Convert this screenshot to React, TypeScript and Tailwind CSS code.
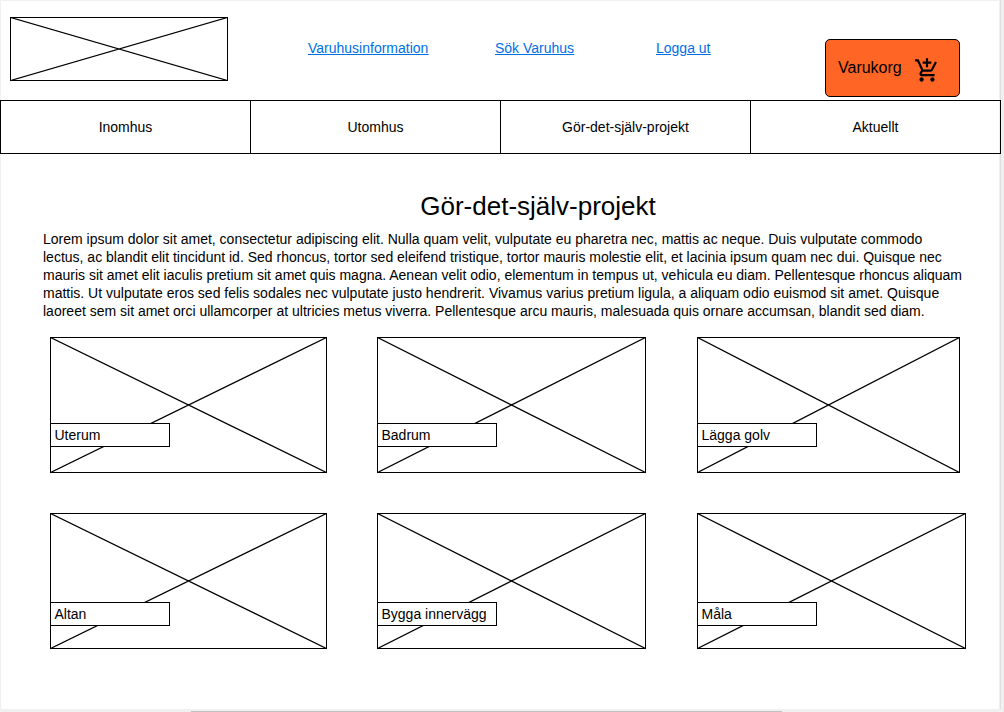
import { MdAddShoppingCart } from "react-icons/md";

function ImageBox({ width, height }: { width: number; height: number }) {
  return (
    <svg width={width} height={height} className="block" stroke="#000" fill="none">
      <rect x="0.5" y="0.5" width={width - 1} height={height - 1} shapeRendering="crispEdges" />
      <path d={`M0.5 0.5L${width - 0.5} ${height - 0.5}M${width - 0.5} 0.5L0.5 ${height - 0.5}`} strokeWidth="1.3" />
    </svg>
  );
}

function ProjectCard({ label, width, low }: { label: string; width: number; low?: boolean }) {
  return (
    <div className="relative">
      <ImageBox width={width} height={136} />
      <div
        className={`absolute left-0 flex h-6 w-[120px] items-center border border-black bg-white pl-[3.5px] ${low ? "top-[89px]" : "top-[86px]"}`}
      >
        {label}
      </div>
    </div>
  );
}

const navItems = ["Inomhus", "Utomhus", "Gör-det-själv-projekt", "Aktuellt"];

const intro = [
  "Lorem ipsum dolor sit amet, consectetur adipiscing elit. Nulla quam velit, vulputate eu pharetra nec, mattis ac neque. Duis vulputate commodo",
  "lectus, ac blandit elit tincidunt id. Sed rhoncus, tortor sed eleifend tristique, tortor mauris molestie elit, et lacinia ipsum quam nec dui. Quisque nec",
  "mauris sit amet elit iaculis pretium sit amet quis magna. Aenean velit odio, elementum in tempus ut, vehicula eu diam. Pellentesque rhoncus aliquam",
  "mattis. Ut vulputate eros sed felis sodales nec vulputate justo hendrerit. Vivamus varius pretium ligula, a aliquam odio euismod sit amet. Quisque",
  "laoreet sem sit amet orci ullamcorper at ultricies metus viverra. Pellentesque arcu mauris, malesuada quis ornare accumsan, blandit sed diam.",
];

export default function App() {
  return (
    <div className="flex h-[712px] w-[1004px] flex-col overflow-hidden bg-[#f0f0f0] font-['Liberation_Sans',Arial,sans-serif] text-[14px] leading-[18px] text-black">
      <div className="flex h-[709px] shrink-0">
        <div className="z-10 w-[1000px] shrink-0 border-t border-r border-l border-[#f0f0f0] bg-white">
          <header className="flex h-[99px] items-start">
            <div className="mt-4 ml-[9px]">
              <ImageBox width={218} height={64} />
            </div>
            <nav className="mt-[38px] ml-20 flex w-[517px] text-[#006fe6] underline">
              <a className="w-[187px]">Varuhusinformation</a>
              <a className="w-[161px]">Sök Varuhus</a>
              <a>Logga ut</a>
            </nav>
            <button className="mt-[38px] flex h-[58px] w-[135px] items-start rounded-[5px] border border-black bg-[#ff6524] pl-3 text-base">
              <span className="mt-4 w-[76px] text-left">Varukorg</span>
              <MdAddShoppingCart className="mt-[17px] h-[27px] w-[26px]" preserveAspectRatio="none" />
            </button>
          </header>
          <nav className="-ml-px flex h-[54px] w-[1001px] border border-black">
            {navItems.map((item) => (
              <a
                key={item}
                className="flex w-[250px] shrink-0 items-center justify-center border-r border-black pb-px last:w-[249px] last:border-r-0"
              >
                {item}
              </a>
            ))}
          </nav>
          <main className="pl-[42px]">
            <h1 className="mt-[37px] w-[990px] text-center text-[26px] leading-[30px]">Gör-det-själv-projekt</h1>
            <p className="mt-[9px] whitespace-nowrap">
              {intro.map((line) => (
                <span key={line} className="block">
                  {line}
                </span>
              ))}
            </p>
            <section className="mt-[17px] ml-[7px] flex flex-col gap-10">
              <div className="flex">
                <div className="w-[327px]"><ProjectCard label="Uterum" width={277} /></div>
                <div className="w-80"><ProjectCard label="Badrum" width={269} /></div>
                <ProjectCard label="Lägga golv" width={263} />
              </div>
              <div className="flex">
                <div className="w-[327px]"><ProjectCard label="Altan" width={277} low /></div>
                <div className="w-80"><ProjectCard label="Bygga innervägg" width={269} low /></div>
                <ProjectCard label="Måla" width={269} low />
              </div>
            </section>
          </main>
        </div>
        <div className="w-px bg-[#e0e0e0]" />
      </div>
      <div className="mt-[2px] ml-[191px] h-px w-[591px] bg-[#c1c1c1]" />
    </div>
  );
}
